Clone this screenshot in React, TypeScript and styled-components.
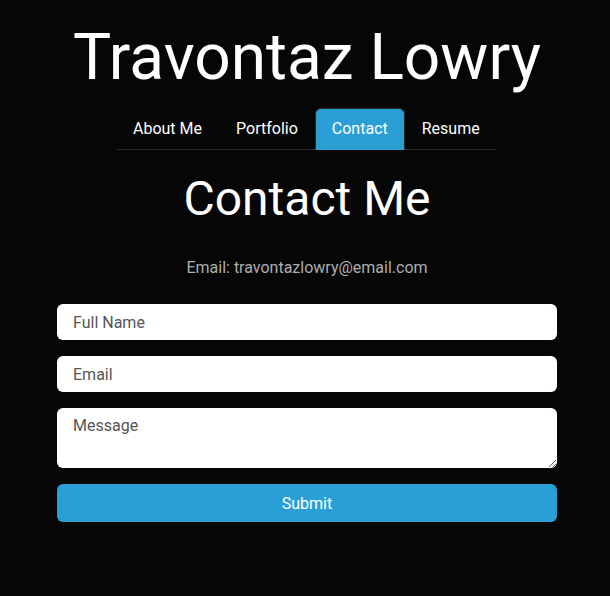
import styled, { createGlobalStyle } from 'styled-components'

const GlobalStyle = createGlobalStyle`
  html, body {
    margin: 0;
    background: #060606;
    color: #adafae;
    font-family: Roboto, "Liberation Sans", sans-serif;
  }
  * { box-sizing: border-box; }
`

const navItems = ["About Me", "Portfolio", "Contact", "Resume"]

const App = () => {
    return (
        <Page>
            <GlobalStyle />
            <Name>Travontaz Lowry</Name>
            <Nav>
                {navItems.map((item) => (
                    <Tab key={item} $active={item === "Contact"}>{item}</Tab>
                ))}
            </Nav>
            <Heading>Contact Me</Heading>
            <EmailLine>Email: travontazlowry@email.com</EmailLine>
            <Form onSubmit={(e) => e.preventDefault()}>
                <Field type="text" placeholder="Full Name" />
                <Field type="email" placeholder="Email" />
                <Message placeholder="Message" />
                <Submit type="submit">Submit</Submit>
            </Form>
        </Page>
    )
}

export default App

const Page = styled.div`
  display: flex;
  flex-direction: column;
  align-items: center;
  padding: 20px 0 40px 4px;
  min-height: 596px;
`

const Name = styled.h1`
  margin: 0;
  font-size: 64px;
  font-weight: 400;
  line-height: 1.2;
  color: #fff;
`

const Nav = styled.ul`
  display: flex;
  list-style: none;
  margin: 11px 0 0 -2px;
  padding: 0;
  width: 380px;
  border-bottom: 1px solid #282828;
`

const Tab = styled.li<{ $active?: boolean }>`
  padding: 8px 16px;
  margin-bottom: -1px;
  font-size: 16px;
  line-height: 24px;
  white-space: nowrap;
  color: #fff;
  border: 1px solid ${(p) => (p.$active ? "#282828" : "transparent")};
  border-bottom-color: ${(p) => (p.$active ? "#2a9fd6" : "transparent")};
  border-radius: 6px 6px 0 0;
  background: ${(p) => (p.$active ? "#2a9fd6" : "transparent")};
  cursor: pointer;
`

const Heading = styled.h2`
  margin: 20px 0 0;
  font-size: 48px;
  font-weight: 400;
  line-height: 1.2;
  color: #fff;
`

const EmailLine = styled.p`
  margin: 29px 0 0;
  font-size: 16px;
  line-height: 24px;
  color: #adafae;
`

const Form = styled.form`
  display: flex;
  flex-direction: column;
  gap: 16px;
  width: 500px;
  margin-top: 24px;
`

const Field = styled.input`
  height: 36px;
  padding: 6px 16px;
  border: none;
  border-radius: 6px;
  background: #fff;
  font-family: inherit;
  font-size: 16px;
  color: #333;

  &::placeholder {
    color: #555;
  }
`

const Message = styled.textarea`
  height: 60px;
  padding: 6px 16px;
  border: none;
  border-radius: 6px;
  background: #fff;
  font-family: inherit;
  font-size: 16px;
  line-height: 24px;
  color: #333;

  &::placeholder {
    color: #555;
  }
`

const Submit = styled.button`
  height: 38px;
  border: none;
  border-radius: 6px;
  background: #2a9fd6;
  color: #fff;
  font-family: inherit;
  font-size: 16px;
  cursor: pointer;
`
